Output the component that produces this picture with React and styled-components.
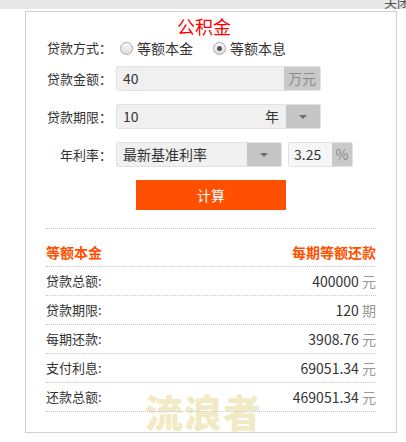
import React from "react";
import styled, { createGlobalStyle } from "styled-components";

const GlobalStyle = createGlobalStyle`
  html, body {
    margin: 0;
    padding: 0;
    background: #fff;
  }
  body {
    font-family: "Noto Sans CJK SC", "Noto Sans", sans-serif;
    color: #333;
  }
`;

const results = [
  { label: "贷款总额:", value: "400000", unit: "元" },
  { label: "贷款期限:", value: "120", unit: "期" },
  { label: "每期还款:", value: "3908.76", unit: "元" },
  { label: "支付利息:", value: "69051.34", unit: "元" },
  { label: "还款总额:", value: "469051.34", unit: "元" },
];

export default function App() {
  return (
    <>
      <GlobalStyle />
      <TopStrip>
        <CloseText>关闭</CloseText>
      </TopStrip>
      <Card>
        <Watermark>流浪者</Watermark>
        <Title>公积金</Title>

        <FormRow $top={0} $height={20}>
          <Label>贷款方式：</Label>
          <RadioGroup>
            <RadioItem>
              <Radio />
              等额本金
            </RadioItem>
            <RadioItem>
              <Radio $checked />
              等额本息
            </RadioItem>
          </RadioGroup>
        </FormRow>

        <FormRow $top={8}>
          <Label>贷款金额：</Label>
          <Field $width={205}>
            <FieldText>40</FieldText>
            <Addon $width={36}>万元</Addon>
          </Field>
        </FormRow>

        <FormRow $top={13}>
          <Label>贷款期限：</Label>
          <Field $width={205}>
            <FieldText>10</FieldText>
            <Suffix>年</Suffix>
            <ArrowBox>
              <Caret />
            </ArrowBox>
          </Field>
        </FormRow>

        <FormRow $top={13}>
          <Label>年利率：</Label>
          <Field $width={166}>
            <FieldText>最新基准利率</FieldText>
            <ArrowBox>
              <Caret />
            </ArrowBox>
          </Field>
          <Field $width={65} $light $gap={6}>
            <FieldText $pad={5}>3.25</FieldText>
            <Addon $width={20}>%</Addon>
          </Field>
        </FormRow>

        <CalcButton>计算</CalcButton>

        <Results>
          <HeadRow>
            <HeadText>等额本金</HeadText>
            <HeadText>每期等额还款</HeadText>
          </HeadRow>
          {results.map((r) => (
            <ResultRow key={r.label}>
              <ResultLabel>{r.label}</ResultLabel>
              <ResultValue>
                {r.value} <Unit>{r.unit}</Unit>
              </ResultValue>
            </ResultRow>
          ))}
        </Results>
      </Card>
    </>
  );
}

const TopStrip = styled.div`
  height: 9px;
  background: #e8e8e8;
  overflow: hidden;
  display: flex;
  justify-content: flex-end;
`;

const CloseText = styled.span`
  font-size: 13px;
  line-height: 13px;
  margin-top: -5px;
  margin-right: -4px;
  color: #555;
`;

const Card = styled.div`
  position: relative;
  box-sizing: border-box;
  width: 372px;
  height: 422px;
  margin: 2px 0 0 25px;
  border: 1px solid #cfcfcf;
  padding-top: 2px;
`;

const Title = styled.div`
  font-size: 18px;
  line-height: 24px;
  color: #f00;
  text-align: center;
  padding-right: 14px;
`;

const FormRow = styled.div`
  display: flex;
  align-items: center;
  height: ${(p) => p.$height || 25}px;
  margin-top: ${(p) => p.$top}px;
`;

const Label = styled.div`
  width: 86px;
  text-align: right;
  font-size: 13px;
  line-height: 20px;
  color: #333;
  margin-right: 4px;
  white-space: nowrap;
`;

const RadioGroup = styled.div`
  display: flex;
  align-items: center;
  gap: 20px;
  margin-left: 4px;
`;

const RadioItem = styled.label`
  display: flex;
  align-items: center;
  gap: 4px;
  font-size: 14px;
  line-height: 20px;
  color: #333;
`;

const Radio = styled.span`
  position: relative;
  box-sizing: border-box;
  width: 13px;
  height: 13px;
  border-radius: 50%;
  border: 1px solid #a9a9a9;
  background: linear-gradient(#fafafa, #dcdcdc);

  &::after {
    content: "";
    display: ${(p) => (p.$checked ? "block" : "none")};
    position: absolute;
    left: 3px;
    top: 3px;
    width: 5px;
    height: 5px;
    border-radius: 50%;
    background: #555;
  }
`;

const Field = styled.div`
  box-sizing: border-box;
  display: flex;
  align-items: stretch;
  width: ${(p) => p.$width}px;
  height: 25px;
  margin-left: ${(p) => p.$gap || 0}px;
  border: 1px solid #e2e2e2;
  border-radius: 2px;
  background: ${(p) => (p.$light ? "#f6f6f6" : "#f0f0f0")};
  overflow: hidden;
`;

const FieldText = styled.div`
  flex: 1;
  padding-left: ${(p) => p.$pad || 6}px;
  font-size: 14px;
  line-height: 23px;
  color: #333;
  white-space: nowrap;
`;

const Suffix = styled.div`
  font-size: 14px;
  line-height: 23px;
  color: #333;
  margin-right: 7px;
`;

const Addon = styled.div`
  width: ${(p) => p.$width}px;
  background: #c9c9c9;
  color: #8a8a8a;
  font-size: 14px;
  line-height: 23px;
  text-align: center;
`;

const ArrowBox = styled.div`
  width: 34px;
  background: #c6c6c6;
  display: flex;
  align-items: center;
  justify-content: center;
`;

const Caret = styled.span`
  width: 0;
  height: 0;
  border-left: 4px solid transparent;
  border-right: 4px solid transparent;
  border-top: 4px solid #6d6d6d;
`;

const CalcButton = styled.button`
  display: block;
  width: 150px;
  height: 30px;
  margin: 13px auto 0;
  padding: 0;
  border: none;
  background: #ff4f00;
  color: #fff;
  font-family: "Noto Sans CJK SC", sans-serif;
  font-size: 14px;
  line-height: 30px;
  cursor: pointer;
`;

const Results = styled.div`
  position: relative;
  z-index: 1;
  margin: 18px 20px 0 20px;
  border-top: 1px dotted #c8c8c8;
`;

const HeadRow = styled.div`
  display: flex;
  justify-content: space-between;
  padding: 13px 0 4px;
  border-bottom: 1px dotted #c8c8c8;
`;

const HeadText = styled.span`
  font-size: 14px;
  line-height: 20px;
  font-weight: bold;
  color: #ff5000;
`;

const ResultRow = styled.div`
  display: flex;
  justify-content: space-between;
  align-items: center;
  height: 28px;
  border-bottom: 1px dotted #c8c8c8;
`;

const ResultLabel = styled.span`
  font-size: 13px;
  line-height: 28px;
  color: #333;
`;

const ResultValue = styled.span`
  font-size: 14px;
  line-height: 28px;
  color: #333;
  white-space: pre;
`;

const Unit = styled.span`
  color: #999;
`;

const Watermark = styled.div`
  position: absolute;
  z-index: 0;
  left: 119px;
  top: 379px;
  font-size: 38px;
  line-height: 40px;
  font-weight: 900;
  color: #f2eac4;
  pointer-events: none;
  letter-spacing: 1px;
`;
